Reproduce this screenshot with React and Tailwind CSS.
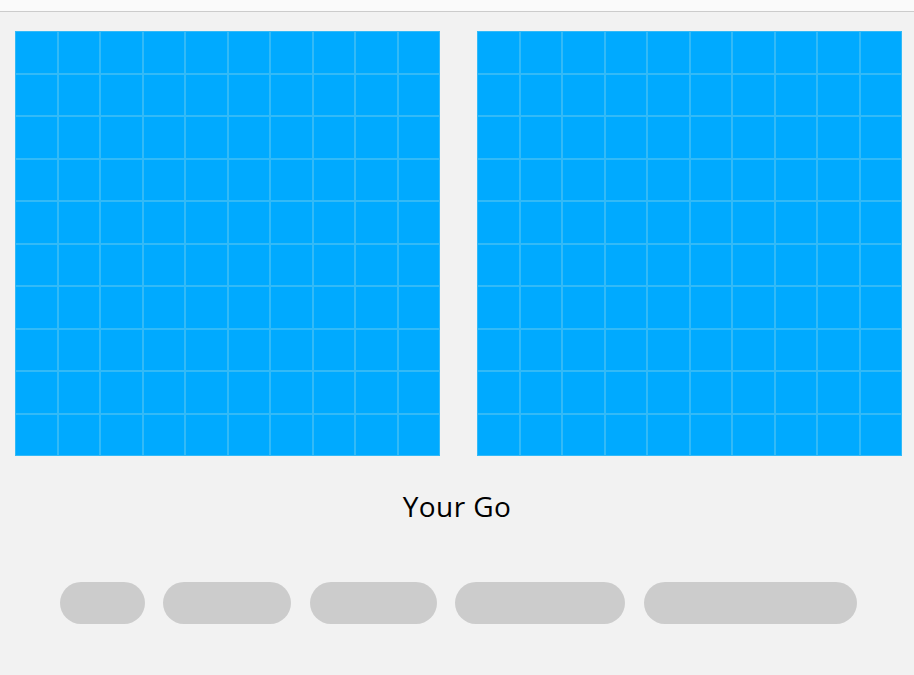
import React from "react";

const cells = Array.from({ length: 100 }, (_, i) => i);
const pills = [85, 128, 127, 170, 213];

function Board() {
  return (
    <div className="grid grid-cols-10 w-[425px] h-[425px] bg-[#00aaff]">
      {cells.map((c) => (
        <div key={c} className="border border-[#33baf7] bg-[#00aaff]" />
      ))}
    </div>
  );
}

export default function App() {
  return (
    <div
      className="w-[914px] h-[675px] bg-[#f2f2f2] overflow-hidden"
      style={{ fontFamily: "'Open Sans', 'Noto Sans', sans-serif" }}
    >
      <div className="h-[12px] bg-[#fafafa] border-b border-[#cccccc]" />

      {/* boards */}
      <div className="flex pl-[15px] pt-[19px] gap-[37px]">
        <Board />
        <Board />
      </div>

      <div className="flex justify-center pt-[31px]">
        <h1 className="text-[28px] leading-[38px] text-black tracking-[0.4px]">Your Go</h1>
      </div>

      {/* ship placeholders */}
      <div className="flex justify-center gap-[18.5px] pt-[57px] pl-[2px]">
        {pills.map((w, i) => (
          <div
            key={i}
            className="h-[42px] rounded-full bg-[#cccccc]"
            style={{ width: w }}
          />
        ))}
      </div>
    </div>
  );
}
